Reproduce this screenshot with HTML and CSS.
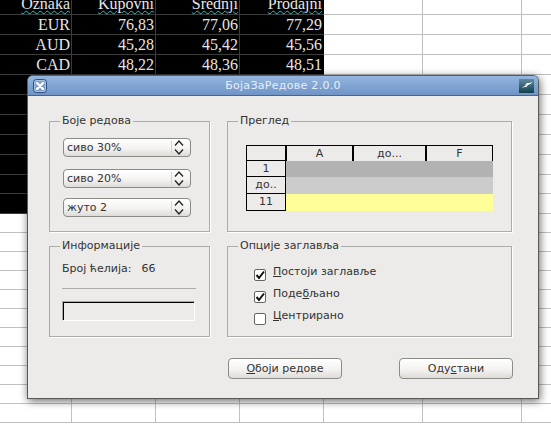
FILE: index.html
```html
<!DOCTYPE html>
<html lang="sr">
<head>
    <meta charset="UTF-8">
    <meta name="viewport" content="width=device-width, initial-scale=1.0">
    <title>БојаЗаРедове 2.0.0</title>
    <link rel="stylesheet" href="styles.css">
</head>
<body>
    <div class="sheet">
        <div class="row data first">
            <span class="cell c1"><span class="wavy">Oznaka</span></span>
            <span class="cell"><span class="wavy">Kupovni</span></span>
            <span class="cell"><span class="wavy">Srednji</span></span>
            <span class="cell"><span class="wavy">Prodajni</span></span>
        </div>
        <div class="row data"><span class="cell c1">EUR</span><span class="cell">76,83</span><span class="cell">77,06</span><span class="cell">77,29</span></div>
        <div class="row data"><span class="cell c1">AUD</span><span class="cell">45,28</span><span class="cell">45,42</span><span class="cell">45,56</span></div>
        <div class="row data"><span class="cell c1">CAD</span><span class="cell">48,22</span><span class="cell">48,36</span><span class="cell">48,51</span></div>
        <div class="row data"></div>
        <div class="row data"></div>
        <div class="row data"></div>
        <div class="row data"></div>
        <div class="row data"></div>
        <div class="row data short"></div>
        <div class="row data"></div>
        <div class="row short"></div>
        <div class="row short"></div>
        <div class="row short"></div>
        <div class="row short"></div>
        <div class="row short"></div>
        <div class="row short"></div>
        <div class="row short"></div>
        <div class="row short"></div>
        <div class="row short"></div>
        <div class="row short"></div>
        <div class="row short"></div>
    </div>

    <div class="dialog">
        <div class="titlebar">
            <svg class="close-icon" width="14" height="14" viewBox="0 0 14 14">
                <rect x="0.5" y="0.5" width="13" height="13" rx="3" fill="#7f9fcb" stroke="#2f4f80"/>
                <rect x="1.5" y="1.5" width="11" height="11" rx="2" fill="none" stroke="#a9c2e4"/>
                <path d="M4 4 L10 10 M10 4 L4 10" stroke="#ffffff" stroke-width="2.4" stroke-linecap="round"/>
            </svg>
            <span class="title">БојаЗаРедове 2.0.0</span>
            <svg class="app-icon" width="15" height="14" viewBox="0 0 15 14">
                <defs>
                    <linearGradient id="appfill" x1="0" y1="0" x2="0" y2="1">
                        <stop offset="0" stop-color="#5f8a9c"/>
                        <stop offset="1" stop-color="#123f4d"/>
                    </linearGradient>
                </defs>
                <rect width="15" height="14" fill="url(#appfill)"/>
                <path d="M2 10 C5 7 7 9 9 6.500 L7 6 C5 7.500 4 7.500 2 10 Z" fill="#ffffff"/>
                <path d="M6 5.500 C9 3 10 5 13.500 2.500 C12 5.500 10 5.500 8.500 6 Z" fill="#ffffff"/>
            </svg>
        </div>

        <div class="dialog-body">
            <div class="groups">
                <div class="group colors">
                    <span class="legend">Боје редова</span>
                    <div class="spin"><span class="spin-text">сиво 30%</span><svg width="10" height="17" viewBox="0 0 10 17"><path d="M1 6.500 L5 2 L9 6.500 M1 10.500 L5 15 L9 10.500" fill="none" stroke="#222" stroke-width="1.300"/></svg></div>
                    <div class="spin"><span class="spin-text">сиво 20%</span><svg width="10" height="17" viewBox="0 0 10 17"><path d="M1 6.500 L5 2 L9 6.500 M1 10.500 L5 15 L9 10.500" fill="none" stroke="#222" stroke-width="1.300"/></svg></div>
                    <div class="spin tight"><span class="spin-text">жуто 2</span><svg width="10" height="17" viewBox="0 0 10 17"><path d="M1 6.500 L5 2 L9 6.500 M1 10.500 L5 15 L9 10.500" fill="none" stroke="#222" stroke-width="1.300"/></svg></div>
                </div>

                <div class="group preview">
                    <span class="legend">Преглед</span>
                    <div class="preview-grid">
                        <div class="head"></div>
                        <div class="head">A</div>
                        <div class="head">до...</div>
                        <div class="head">F</div>
                        <div class="side">1</div>
                        <div class="band grey30"></div>
                        <div class="side">до..</div>
                        <div class="band grey20"></div>
                        <div class="side">11</div>
                        <div class="band yellow"></div>
                    </div>
                </div>

                <div class="group info">
                    <span class="legend">Информације</span>
                    <div class="count"><span>Број ћелија:</span><span>66</span></div>
                    <div class="separator"></div>
                    <div class="progress"></div>
                </div>

                <div class="group options">
                    <span class="legend">Опције заглавља</span>
                    <div class="check">
                        <span class="box"><svg width="10" height="10" viewBox="0 0 10 10"><path d="M1.500 5 L4 8 L9 1.500" fill="none" stroke="#111" stroke-width="2"/></svg></span>
                        <span class="check-label"><u>П</u>остоји заглавље</span>
                    </div>
                    <div class="check">
                        <span class="box"><svg width="10" height="10" viewBox="0 0 10 10"><path d="M1.500 5 L4 8 L9 1.500" fill="none" stroke="#111" stroke-width="2"/></svg></span>
                        <span class="check-label">Поде<u>б</u>љано</span>
                    </div>
                    <div class="check">
                        <span class="box"></span>
                        <span class="check-label"><u>Ц</u>ентрирано</span>
                    </div>
                </div>
            </div>

            <div class="actions">
                <div class="btn"><span><u>О</u>боји редове</span></div>
                <div class="btn"><span>Оду<u>с</u>тани</span></div>
            </div>
        </div>
    </div>
</body>
</html>
```

FILE: styles.css
```css
html, body {
    margin: 0;
    height: 424px;
    overflow: hidden;
    background-color: white;
}
body {
    font-family: "DejaVu Sans", sans-serif;
    font-size: 11px;
    color: #333;
}

/* spreadsheet behind the dialog */
.sheet {
    font-family: "Liberation Serif", serif;
    font-size: 16px;
    color: #e6e6e6;
}
.row {
    box-sizing: border-box;
    display: flex;
    height: 20px;
    --cols: #c0c0c0;
    background-image:
        linear-gradient(to right, var(--cols) 324px, #c0c0c0 324px),
        linear-gradient(var(--cols), var(--cols)),
        linear-gradient(var(--cols), var(--cols)),
        linear-gradient(var(--cols), var(--cols)),
        linear-gradient(#c0c0c0, #c0c0c0),
        linear-gradient(#c0c0c0, #c0c0c0),
        linear-gradient(#c0c0c0, #c0c0c0);
    background-size: 100% 1px, 1px 100%, 1px 100%, 1px 100%, 1px 100%, 1px 100%, 1px 100%;
    background-position: 0 100%, 71px 0, 155px 0, 239px 0, 323px 0, 422px 0, 521px 0;
    background-repeat: no-repeat;
}
.row.short {
    height: 19px;
}
.row.first {
    height: 15px;
}
.row.data {
    --cols: #3c3c3c;
    background-image:
        linear-gradient(to right, var(--cols) 324px, #c0c0c0 324px),
        linear-gradient(var(--cols), var(--cols)),
        linear-gradient(var(--cols), var(--cols)),
        linear-gradient(var(--cols), var(--cols)),
        linear-gradient(black, black),
        linear-gradient(#c0c0c0, #c0c0c0),
        linear-gradient(#c0c0c0, #c0c0c0),
        linear-gradient(black, black);
    background-size: 100% 1px, 1px 100%, 1px 100%, 1px 100%, 1px 100%, 1px 100%, 1px 100%, 324px 100%;
    background-position: 0 100%, 71px 0, 155px 0, 239px 0, 323px 0, 422px 0, 521px 0, 0 0;
}
.cell {
    width: 83px;
    padding-right: 1px;
    text-align: right;
    line-height: 19px;
    white-space: nowrap;
}
.cell.c1 {
    width: 70px;
}
.first .cell {
    line-height: 7px;
}
.wavy {
    text-decoration: underline wavy #18c8c8 1px;
    text-underline-offset: 1px;
}

/* dialog window */
.dialog {
    position: absolute;
    left: 27px;
    top: 75px;
    width: 512px;
    height: 324px;
    box-sizing: border-box;
    background-color: #ecebe9;
    border: 1px solid #5a5a58;
    border-top-color: #3f5f8f;
    border-radius: 6px 6px 0 0;
    box-shadow: 1px 2px 9px rgba(0, 0, 0, 0.6);
}
.titlebar {
    display: flex;
    align-items: center;
    justify-content: space-between;
    height: 19px;
    padding: 0 4px 0 5px;
    background: linear-gradient(#94b6df, #6f94c6);
    border-bottom: 1px solid #3f669f;
    border-radius: 5px 5px 0 0;
}
.title {
    color: #e8eef8;
    letter-spacing: 0.3px;
}
.dialog-body {
    padding: 25px 0 0 21px;
}
.groups {
    display: grid;
    grid-template-columns: 161px 285px;
    grid-template-rows: 111px 91px;
    column-gap: 17px;
    row-gap: 14px;
}
.group {
    position: relative;
    box-sizing: border-box;
    border: 1px solid #adada8;
    box-shadow: 1px 1px 0 white;
}
.legend {
    position: absolute;
    top: -8px;
    left: 10px;
    padding: 0 2px;
    background-color: #ecebe9;
    line-height: 14px;
    white-space: nowrap;
}

/* colour pickers */
.colors {
    padding: 16px 0 0 13px;
}
.spin {
    box-sizing: border-box;
    display: flex;
    align-items: center;
    justify-content: space-between;
    width: 128px;
    height: 19px;
    padding: 0 6px 0 3px;
    background: linear-gradient(white, #f4f3f1 55%, #dedcd8);
    border: 1px solid #8c8c86;
    border-radius: 4px;
}
.spin + .spin {
    margin-top: 12px;
}
.spin + .spin.tight {
    margin-top: 10px;
}
.spin-text {
    flex: 1;
    border-right: 1px solid #d4d3cf;
    margin-right: 2px;
    height: 13px;
    line-height: 13px;
}

/* preview table */
.preview {
    padding: 23px 0 0 18px;
}
.preview-grid {
    display: grid;
    grid-template-columns: 40px 67px 73px 67px;
    grid-template-rows: 16px 16px 17px 17px;
    width: 247px;
    text-align: center;
}
.head {
    box-sizing: border-box;
    border-top: 1px solid black;
    border-left: 1px solid black;
    border-right: 1px solid black;
    line-height: 15px;
}
.head:first-child {
    border-left-width: 1px;
    border-bottom: 1px solid black;
}
.head + .head {
    border-left-width: 1px;
}
.side {
    box-sizing: border-box;
    border-left: 1px solid black;
    border-right: 1px solid black;
    border-bottom: 1px solid black;
    line-height: 15px;
}
.band {
    grid-column: 2 / 5;
}
.grey30 {
    background-color: #b2b2b2;
}
.grey20 {
    background-color: #cccccc;
}
.yellow {
    background-color: #ffff99;
}

/* info box */
.info {
    padding: 15px 13px 0 12px;
}
.count {
    display: flex;
    gap: 10px;
    line-height: 13px;
}
.separator {
    margin-top: 13px;
    height: 1px;
    background-color: #adada8;
}
.progress {
    box-sizing: border-box;
    margin-top: 12px;
    height: 20px;
    width: 133px;
    border: 1px solid white;
    border-top-color: #a8a8a4;
    border-left-color: #a8a8a4;
    box-shadow: inset 1px 1px 0 black;
}

/* checkboxes */
.options {
    padding: 22px 0 0 26px;
}
.check {
    display: flex;
    gap: 7px;
    height: 12px;
}
.check + .check {
    margin-top: 10px;
}
.box {
    box-sizing: border-box;
    display: flex;
    align-items: center;
    justify-content: center;
    width: 12px;
    height: 12px;
    background-color: white;
    border: 1px solid #66665f;
    border-radius: 2px;
}
.check-label {
    margin-top: -4px;
    line-height: 13px;
    white-space: nowrap;
}

/* buttons */
.actions {
    display: flex;
    gap: 57px;
    margin: 21px 0 0 179px;
}
.btn {
    box-sizing: border-box;
    display: flex;
    align-items: center;
    justify-content: center;
    width: 114px;
    height: 21px;
    background: linear-gradient(white, #f4f3f1 55%, #dedcd8);
    border: 1px solid #8c8c86;
    border-radius: 4px;
}
```
